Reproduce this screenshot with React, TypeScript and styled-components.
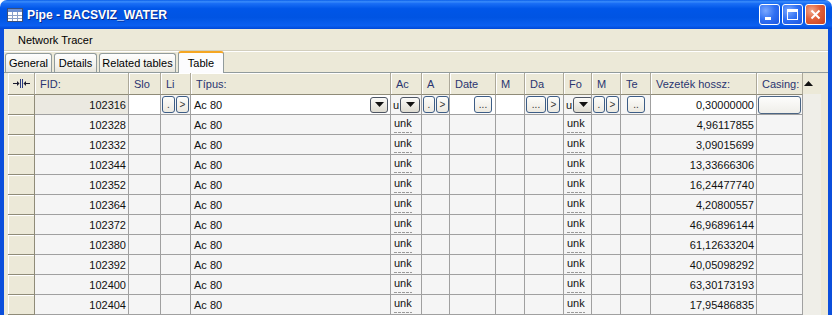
import styled, { createGlobalStyle } from "styled-components";

const GlobalStyle = createGlobalStyle`
  html, body { margin: 0; padding: 0; background: #fff; overflow: hidden; }
  body { font-family: "Liberation Sans", Arial, sans-serif; font-size: 11px; color: #111; }
`;

const COLS = "27px 94px 32px 30px 200px 31px 28px 46px 29px 39px 28px 29px 30px 106px 46px";

const HEADERS = ["FID:", "Slo", "Li", "Típus:", "Ac", "A", "Date", "M", "Da", "Fo", "M", "Te", "Vezeték hossz:", "Casing:"];

const ROWS: [string, string][] = [
  ["102328", "4,96117855"],
  ["102332", "3,09015699"],
  ["102344", "13,33666306"],
  ["102352", "16,24477740"],
  ["102364", "4,20800557"],
  ["102372", "46,96896144"],
  ["102380", "61,12633204"],
  ["102392", "40,05098292"],
  ["102400", "63,30173193"],
  ["102404", "17,95486835"],
];

const TABS = [
  { label: "General", w: 47 },
  { label: "Details", w: 43 },
  { label: "Related tables", w: 77 },
  { label: "Table", w: 46, active: true },
];

const TableIcon = () => (
  <svg width="16" height="16" viewBox="0 0 16 16">
    <rect x="0.5" y="1.5" width="15" height="13" fill="#fff" stroke="#3a4f7a" />
    <rect x="1" y="2" width="14" height="3" fill="#6d8fd0" />
    <path d="M1 8.5h14M1 11.5h14M5.5 5v9M10.5 5v9" stroke="#8aa0c8" strokeWidth="1" />
  </svg>
);

const FitIcon = () => (
  <svg width="17" height="9" viewBox="0 0 17 9">
    <path d="M0 4.5h5" stroke="#1a1a2e" strokeWidth="1" />
    <path d="M4 2l2.5 2.5L4 7z" fill="#1a1a2e" />
    <path d="M7.5 0v9M9.5 0v9" stroke="#2a3a80" strokeWidth="1" />
    <path d="M17 4.5h-5" stroke="#1a1a2e" strokeWidth="1" />
    <path d="M13 2l-2.5 2.5L13 7z" fill="#1a1a2e" />
  </svg>
);

const DownTri = () => (
  <svg width="9" height="5" viewBox="0 0 9 5">
    <path d="M0 0h9L4.5 5z" fill="#111" />
  </svg>
);

const App = () => {
  return (
    <>
      <GlobalStyle />
      <Window>
        <TitleBar>
          <TableIcon />
          <TitleText>Pipe - BACSVIZ_WATER</TitleText>
          <TitleButtons>
            <CaptionBtn>
              <MinGlyph />
            </CaptionBtn>
            <CaptionBtn>
              <MaxGlyph />
            </CaptionBtn>
            <CaptionBtn $close>
              <svg width="11" height="11" viewBox="0 0 11 11">
                <path d="M1.5 1.5l8 8M9.5 1.5l-8 8" stroke="#fff" strokeWidth="2" />
              </svg>
            </CaptionBtn>
          </TitleButtons>
        </TitleBar>
        <Frame>
          <MenuBar>
            <MenuItem>Network Tracer</MenuItem>
          </MenuBar>
          <Separator />
          <TabStrip>
            {TABS.map((t) => (
              <Tab key={t.label} $w={t.w} $active={t.active}>
                {t.label}
              </Tab>
            ))}
          </TabStrip>
          <Panel>
            <GridTable>
              <HeadRow>
                <HeadCell $corner>
                  <FitIcon />
                </HeadCell>
                {HEADERS.map((h, i) => (
                  <HeadCell key={i}>{h}</HeadCell>
                ))}
              </HeadRow>

              <Row>
                <RowHead />
                <Cell $align="right" $bg="#ebe9e1">102316</Cell>
                <Cell $bg="#fff" />
                <Cell $pad="0 1px">
                  <SmallBtn $w={13}>.</SmallBtn>
                  <SmallBtn $w={13}>&gt;</SmallBtn>
                </Cell>
                <Cell $bg="#fff" $align="between" $pad="0 2px 0 3px">
                  <span>Ac 80</span>
                  <ComboBtn $w={18}>
                    <DownTri />
                  </ComboBtn>
                </Cell>
                <Cell $pad="0 1px 0 2px">
                  <span>u</span>
                  <ComboBtn $w={20}>
                    <DownTri />
                  </ComboBtn>
                </Cell>
                <Cell $pad="0 1px">
                  <SmallBtn $w={12}>.</SmallBtn>
                  <SmallBtn $w={13}>&gt;</SmallBtn>
                </Cell>
                <Cell $bg="#fff" $align="right" $pad="0 3px 0 0">
                  <SmallBtn $w={18}>...</SmallBtn>
                </Cell>
                <Cell $bg="#fff" />
                <Cell $pad="0 1px">
                  <SmallBtn $w={20}>...</SmallBtn>
                  <SmallBtn $w={13}>&gt;</SmallBtn>
                </Cell>
                <Cell $pad="0 1px 0 2px">
                  <span>u</span>
                  <ComboBtn $w={20}>
                    <DownTri />
                  </ComboBtn>
                </Cell>
                <Cell $pad="0 1px">
                  <SmallBtn $w={12}>.</SmallBtn>
                  <SmallBtn $w={13}>&gt;</SmallBtn>
                </Cell>
                <Cell $align="center">
                  <SmallBtn $w={18}>..</SmallBtn>
                </Cell>
                <Cell $bg="#fff" $align="right">0,30000000</Cell>
                <Cell $pad="0 1px">
                  <CasingBtn />
                </Cell>
              </Row>

              {ROWS.map(([fid, len]) => (
                <Row key={fid}>
                  <RowHead />
                  <Cell $align="right">{fid}</Cell>
                  <Cell />
                  <Cell />
                  <Cell>Ac 80</Cell>
                  <UnkCell>unk</UnkCell>
                  <Cell />
                  <Cell />
                  <Cell />
                  <Cell />
                  <UnkCell>unk</UnkCell>
                  <Cell />
                  <Cell />
                  <Cell $align="right">{len}</Cell>
                  <Cell />
                </Row>
              ))}
            </GridTable>
            <ScrollBar>
              <ScrollUp>
                <svg width="9" height="5" viewBox="0 0 9 5">
                  <path d="M0 5h9L4.5 0z" fill="#111" />
                </svg>
              </ScrollUp>
            </ScrollBar>
          </Panel>
        </Frame>
      </Window>
    </>
  );
};

export default App;

const Window = styled.div`
  width: 832px;
  height: 315px;
  display: flex;
  flex-direction: column;
  overflow: hidden;
`;
const TitleBar = styled.div`
  height: 29px;
  flex-shrink: 0;
  display: flex;
  align-items: center;
  padding: 0 6px 0 7px;
  box-sizing: border-box;
  border-radius: 7px 7px 0 0;
  background: linear-gradient(
    to bottom,
    #0a5ee9 0%,
    #3a8cfb 6%,
    #1a6ef5 12%,
    #0056e8 30%,
    #0054e3 60%,
    #0a5ff0 88%,
    #0048d8 100%
  );
`;
const TitleText = styled.span`
  margin-left: 4px;
  flex: 1;
  color: #fff;
  font-family: "Liberation Sans", Arial, sans-serif;
  font-weight: bold;
  font-size: 12.2px;
  text-shadow: 1px 1px #0b2a8c;
`;
const TitleButtons = styled.div`
  display: flex;
  gap: 2px;
`;
const CaptionBtn = styled.div<{ $close?: boolean }>`
  width: 21px;
  height: 21px;
  box-sizing: border-box;
  border: 1px solid #fff;
  border-radius: 3px;
  display: flex;
  align-items: center;
  justify-content: center;
  position: relative;
  background: ${(p) =>
    p.$close
      ? "radial-gradient(circle at 30% 30%, #f2a88c 0%, #e0603a 45%, #c9401e 100%)"
      : "radial-gradient(circle at 30% 30%, #7aa8ff 0%, #2f6ff2 50%, #1c55e0 100%)"};
`;
const MinGlyph = styled.div`
  width: 6px;
  height: 3px;
  background: #fff;
  position: absolute;
  left: 5px;
  bottom: 4px;
`;
const MaxGlyph = styled.div`
  width: 11px;
  height: 11px;
  box-sizing: border-box;
  border: 1px solid #fff;
  border-top-width: 3px;
`;
const Frame = styled.div`
  flex: 1;
  display: flex;
  flex-direction: column;
  background: #ece9d8;
  border-left: 4px solid #0b4fdc;
  border-right: 4px solid #0b4fdc;
  min-height: 0;
`;
const MenuBar = styled.div`
  height: 21px;
  display: flex;
  align-items: center;
  padding-left: 14px;
  flex-shrink: 0;
`;
const MenuItem = styled.span`
  color: #000;
  font-size: 11px;
`;
const Separator = styled.div`
  height: 0;
  border-top: 1px solid #d2cebd;
  border-bottom: 1px solid #fff;
  flex-shrink: 0;
`;
const TabStrip = styled.div`
  height: 20px;
  display: flex;
  align-items: flex-end;
  padding-left: 1px;
  flex-shrink: 0;
`;
const Tab = styled.div<{ $w: number; $active?: boolean }>`
  width: ${(p) => p.$w}px;
  height: ${(p) => (p.$active ? 22 : 19)}px;
  margin-right: 2px;
  margin-bottom: ${(p) => (p.$active ? -1 : 0)}px;
  box-sizing: border-box;
  border: 1px solid #919b9c;
  border-bottom: none;
  border-top: ${(p) => (p.$active ? "2px solid #f5a623" : "1px solid #919b9c")};
  border-radius: 3px 3px 0 0;
  background: ${(p) => (p.$active ? "#fcfcfe" : "linear-gradient(#fefefe, #f1f0ea 70%, #e6e4da)")};
  display: flex;
  align-items: center;
  justify-content: center;
  font-size: 11px;
  color: #000;
  position: relative;
  z-index: ${(p) => (p.$active ? 2 : 1)};
`;
const Panel = styled.div`
  flex: 1;
  display: flex;
  border-top: 1px solid #919b9c;
  padding-left: 4px;
  min-height: 0;
  overflow: hidden;
`;
const GridTable = styled.div`
  width: 795px;
  display: flex;
  flex-direction: column;
  background: #f5f5f5;
`;
const HeadRow = styled.div`
  display: grid;
  grid-template-columns: ${COLS};
  height: 22px;
  flex-shrink: 0;
`;
const HeadCell = styled.div<{ $corner?: boolean }>`
  box-sizing: border-box;
  display: flex;
  align-items: center;
  justify-content: ${(p) => (p.$corner ? "center" : "flex-start")};
  padding-left: ${(p) => (p.$corner ? 0 : 5)}px;
  background: #ece9d8;
  border-right: 1px solid #aca899;
  border-bottom: 1px solid #8f8b78;
  box-shadow: inset 1px 1px #fff;
  color: #2a3570;
  font-size: 11px;
  white-space: nowrap;
  overflow: hidden;
`;
const Row = styled.div`
  display: grid;
  grid-template-columns: ${COLS};
  height: 20px;
  flex-shrink: 0;
`;
const RowHead = styled.div`
  box-sizing: border-box;
  background: #ece9d8;
  border-right: 1px solid #8f8b78;
  border-bottom: 1px solid #8f8b78;
  box-shadow: inset 1px 1px #fff;
`;
const Cell = styled.div<{ $align?: "left" | "right" | "center" | "between"; $bg?: string; $pad?: string }>`
  box-sizing: border-box;
  display: flex;
  align-items: center;
  gap: 1px;
  justify-content: ${(p) =>
    p.$align === "right"
      ? "flex-end"
      : p.$align === "center"
      ? "center"
      : p.$align === "between"
      ? "space-between"
      : "flex-start"};
  padding: ${(p) => p.$pad ?? "0 2px 0 3px"};
  background: ${(p) => p.$bg ?? "#f5f5f5"};
  border-right: 1px solid #a0a0a0;
  border-bottom: 1px solid #a0a0a0;
  white-space: nowrap;
  overflow: hidden;
  color: #111;
  font-size: 11px;
`;
/* wrapped "unknown" value: only "unk" fits, the next line's tops peek out as dashes */
const UnkCell = styled.div`
  box-sizing: border-box;
  position: relative;
  padding: 2px 0 0 3px;
  line-height: 12px;
  font-size: 11px;
  color: #111;
  background: #f5f5f5;
  border-right: 1px solid #a0a0a0;
  border-bottom: 1px solid #a0a0a0;
  overflow: hidden;
  &::after {
    content: "";
    position: absolute;
    left: 3px;
    bottom: 1px;
    width: 18px;
    height: 1px;
    background: repeating-linear-gradient(to right, #9a9a9a 0 3px, transparent 3px 4px);
  }
`;
const SmallBtn = styled.div<{ $w: number }>`
  width: ${(p) => p.$w}px;
  height: 17px;
  flex-shrink: 0;
  box-sizing: border-box;
  border: 1px solid #3d5d86;
  border-radius: 3px;
  background: linear-gradient(#fdfdfb, #ece9e0);
  display: flex;
  align-items: center;
  justify-content: center;
  font-size: 10px;
  line-height: 1;
  color: #333;
`;
const ComboBtn = styled.div<{ $w: number }>`
  width: ${(p) => p.$w}px;
  height: 16px;
  flex-shrink: 0;
  box-sizing: border-box;
  border: 1px solid #4d5563;
  border-radius: 3px;
  background: linear-gradient(#fbfbf9, #dedbd0);
  display: flex;
  align-items: center;
  justify-content: center;
`;
const CasingBtn = styled.div`
  flex: 1;
  height: 18px;
  box-sizing: border-box;
  border: 1px solid #4b6584;
  border-radius: 3px;
  background: linear-gradient(#fdfdfc, #efeee9);
`;
const ScrollBar = styled.div`
  width: 18px;
  display: flex;
  flex-direction: column;
  background: #efeee8;
`;
const ScrollUp = styled.div`
  height: 21px;
  display: flex;
  align-items: center;
  padding-left: 1px;
  background: #ece9d8;
`;
